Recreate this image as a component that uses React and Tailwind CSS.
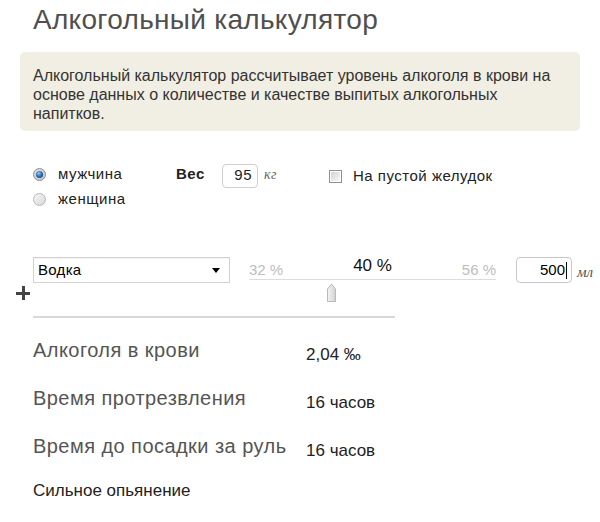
import React from 'react';

const font = "font-['Liberation_Sans',Arial,sans-serif]";

function Radio({ checked }) {
  return (
    <svg width="13" height="13" viewBox="0 0 13 13">
      <defs>
        <linearGradient id={checked ? 'rg1' : 'rg2'} x1="0" y1="0" x2="1" y2="1">
          <stop offset="0" stopColor={checked ? '#e4e4e4' : '#f7f7f7'} />
          <stop offset="1" stopColor={checked ? '#c2c2c2' : '#d6d6d6'} />
        </linearGradient>
        <radialGradient id="dot" cx="0.4" cy="0.35" r="0.7">
          <stop offset="0" stopColor="#9cc8f0" />
          <stop offset="0.6" stopColor="#2d6db3" />
          <stop offset="1" stopColor="#1b4f8c" />
        </radialGradient>
      </defs>
      <circle cx="6.5" cy="6.5" r="6" fill={`url(#${checked ? 'rg1' : 'rg2'})`} stroke={checked ? '#8a8f96' : '#b8b8b8'} strokeWidth="1" />
      {checked && <circle cx="6.5" cy="6.5" r="3.6" fill="url(#dot)" />}
    </svg>
  );
}

function Checkbox() {
  return (
    <div className="w-[13px] h-[13px] border border-[#8f8f8f] bg-white p-[1px]">
      <div className="w-full h-full bg-gradient-to-br from-[#d4d4d4] to-[#f8f8f8]" />
    </div>
  );
}

function Thumb() {
  return (
    <svg width="11" height="20" viewBox="0 0 11 20">
      <defs>
        <linearGradient id="th" x1="0" y1="0" x2="1" y2="0">
          <stop offset="0" stopColor="#f4f4f4" />
          <stop offset="1" stopColor="#d2d2d2" />
        </linearGradient>
      </defs>
      <path d="M1.5 6 L5.5 1 L9.5 6 V18.5 H1.5 Z" fill="url(#th)" stroke="#b9b9b9" strokeWidth="1" />
    </svg>
  );
}

const results = [
  { label: 'Алкоголя в крови', value: '2,04 ‰', h: 'h-[48px]' },
  { label: 'Время протрезвления', value: '16 часов', h: 'h-[48px]' },
  { label: 'Время до посадки за руль', value: '16 часов', h: 'h-[45px]' },
];

export default function App() {
  const min = 32;
  const max = 56;
  const strength = 40;
  const thumbLeft = ((strength - min) / (max - min)) * 247 - 5;

  return (
    <div className={`w-[600px] h-[522px] bg-white overflow-hidden ${font}`}>
      <h1 className="pl-[33px] pt-[3px] text-[28px] leading-[34px] tracking-[0.3px] font-normal text-[#4f4f4f]">
        Алкогольный калькулятор
      </h1>

      <div className="mx-[20px] mt-[15px] rounded-[5px] bg-[#f1efe3] px-[13px] pt-[14px] pb-[8px] text-[16px] leading-[19px] text-[#333]">
        <span className="block whitespace-nowrap">Алкогольный калькулятор рассчитывает уровень алкоголя в крови на</span>
        <span className="block whitespace-nowrap">основе данных о количестве и качестве выпитых алкогольных</span>
        <span className="block whitespace-nowrap">напитков.</span>
      </div>

      <div className="mt-[31px] pl-[33px] flex items-start text-[15px] tracking-[0.5px] text-[#222]">
        <div className="w-[143px]">
          <label className="flex items-center h-[25px] gap-[12px]">
            <Radio checked />
            <span>мужчина</span>
          </label>
          <label className="flex items-center h-[25px] gap-[12px]">
            <Radio />
            <span>женщина</span>
          </label>
        </div>
        <div className="w-[153px] flex items-center h-[25px]">
          <span className="w-[46px] font-bold">Вес</span>
          <div className="w-[36px] h-[24px] mt-[2px] border border-[#cfcfcf] rounded-[4px] flex items-center justify-end pr-[5px]">
            95
          </div>
          <span className="ml-[6px] italic font-['Liberation_Serif',serif] text-[14px] text-[#666]">кг</span>
        </div>
        <label className="flex items-center h-[25px] mt-[2px] gap-[11px]">
          <Checkbox />
          <span>На пустой желудок</span>
        </label>
      </div>

      <div className="mt-[45px] pl-[33px] flex items-start h-[26px]">
        <div className="w-[197px] h-[26px] border border-[#d2d2d2] shadow-[inset_0_1px_1px_rgba(0,0,0,0.05)] bg-white flex items-center justify-between pl-[4px] pr-[9px] text-[15px] tracking-[0.3px] text-black">
          <span>Водка</span>
          <span className="w-0 h-0 border-l-[4px] border-r-[4px] border-t-[5px] border-l-transparent border-r-transparent border-t-black" />
        </div>

        <div className="relative ml-[19px] w-[247px] h-[26px]">
          <div className="flex items-start justify-between">
            <span className="mt-[4px] text-[15px] leading-[18px] text-[#bdbdbd]">32 %</span>
            <span className="mt-[0px] text-[17px] leading-[18px] text-[#111]">40 %</span>
            <span className="mt-[4px] text-[15px] leading-[18px] text-[#bdbdbd]">56 %</span>
          </div>
          <div className="h-[1px] bg-[#dcdcdc]" />
          <div className="absolute top-[26px]" style={{ left: `${thumbLeft}px` }}>
            <Thumb />
          </div>
        </div>

        <div className="ml-[20px] w-[56px] h-[26px] border border-[#c8c8c8] rounded-[4px] flex items-center justify-end pr-[4px] text-[15px] text-black">
          500<span className="ml-[1px] w-[1px] h-[17px] bg-black" />
        </div>
        <span className="ml-[5px] mt-[4px] italic font-['Liberation_Serif',serif] text-[15px] text-[#555]">мл</span>
      </div>

      <div className="mt-[3px] ml-[16px] w-[14px] h-[14px] relative">
        <div className="absolute left-0 top-[6px] w-[14px] h-[2.5px] bg-[#444]" />
        <div className="absolute left-[6px] top-0 w-[2.5px] h-[14px] bg-[#444]" />
      </div>

      <div className="mt-[16px] ml-[33px] w-[362px] h-[2px] bg-[#d8d8d8]" />

      <div className="mt-[20px] pl-[33px]">
        {results.map((r) => (
          <div key={r.label} className={`flex items-start ${r.h}`}>
            <span className="w-[273px] text-[20px] leading-[24px] tracking-[0.45px] text-[#555]">{r.label}</span>
            <span className="mt-[5px] text-[17px] leading-[24px] text-[#222]">{r.value}</span>
          </div>
        ))}
        <div className="text-[17px] leading-[24px] text-[#222]">Сильное опьянение</div>
      </div>
    </div>
  );
}
